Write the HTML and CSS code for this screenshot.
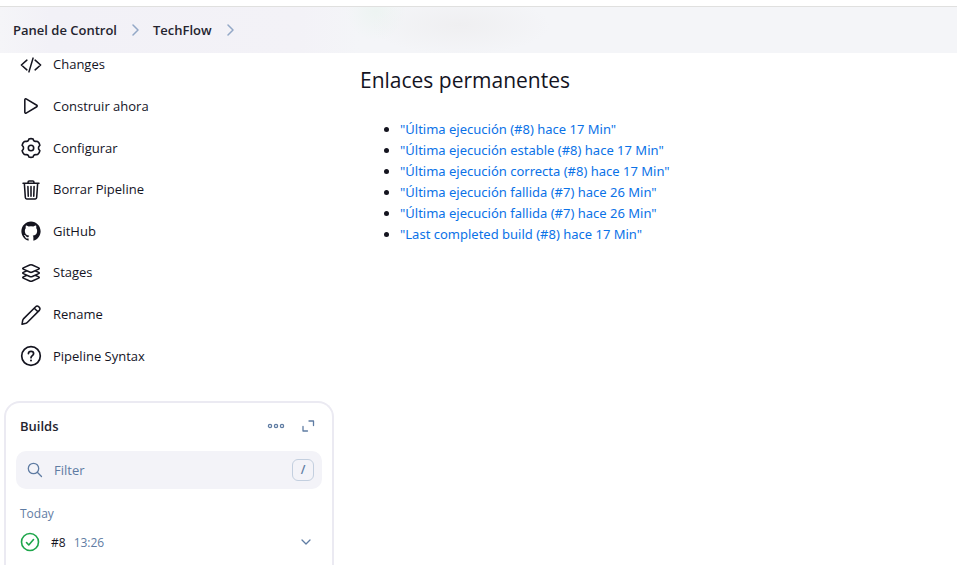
FILE: index.html
```html
<!DOCTYPE html>
<html lang="es">
<head>
<meta charset="utf-8">
<title>TechFlow</title>
<meta name="viewport" content="width=device-width, initial-scale=1">
<link rel="stylesheet" href="styles.css">
</head>
<body>
<header class="topbar">
  <nav class="crumbs" aria-label="Breadcrumb">
    <a href="#">Panel de Control</a>
    <svg class="chevron" viewBox="0 0 12 12"><path d="M4 1l5 5-5 5"/></svg>
    <a href="#">TechFlow</a>
    <svg class="chevron" viewBox="0 0 12 12"><path d="M4 1l5 5-5 5"/></svg>
  </nav>
</header>
<div class="page">
  <aside class="sidebar">
    <nav class="tasks" aria-label="Pipeline">
      <a class="task" href="#"><svg class="icon" viewBox="0 0 512 512"><path d="M160 368L32 256l128-112M352 368l128-112-128-112M304 96l-96 320"/></svg>Changes</a>
      <a class="task" href="#"><svg class="icon" viewBox="0 0 512 512"><path d="M112 111v290c0 17.44 17 28.52 31 20.16l247.9-148.37c12.12-7.25 12.12-26.33 0-33.58L143 90.84c-14-8.36-31 2.72-31 20.16z"/></svg>Construir ahora</a>
      <a class="task" href="#"><svg class="icon gear" viewBox="0 0 22 22"><path d="M8.9 2Q11 1.2 13.1 2L13.7 3.7Q14.8 4.6 16 4.3L17.8 4.6Q19.5 6 19.9 8.3L18.7 9.7Q18.3 11 18.7 12.3L19.9 13.7Q19.5 16 17.8 17.4L16 17.7Q14.8 17.4 13.7 18.3L13.1 20Q11 20.8 8.9 20L8.3 18.3Q7.2 17.4 6 17.7L4.2 17.4Q2.5 16 2.1 13.7L3.3 12.3Q3.7 11 3.3 9.7L2.1 8.3Q2.5 6 4.2 4.6L6 4.3Q7.2 4.6 8.3 3.7Z"/><circle cx="11" cy="11" r="2.7"/></svg>Configurar</a>
      <a class="task" href="#"><svg class="icon" viewBox="0 0 512 512"><path d="M102 112l22 320c.95 18.490 14.400 32 32 32h200c17.670 0 30.870-13.510 32-32l22-320M70 100h372M188 100V72a24 24 0 0124-24h88a24 24 0 0124 24v28M256 176v224M184 176l8 224M328 176l-8 224"/></svg>Borrar Pipeline</a>
      <a class="task" href="#"><svg class="icon solid" viewBox="0 0 512 512"><path d="M256 32C132.300 32 32 134.900 32 261.700c0 101.500 64.200 187.500 153.200 217.900a17.560 17.560 0 003.800.400c8.300 0 11.500-6.100 11.500-11.400 0-5.500-.2-19.900-.3-39.100a102.400 102.400 0 01-22.600 2.700c-43.100 0-52.900-33.500-52.900-33.500-10.200-26.500-24.900-33.600-24.900-33.600-19.500-13.700-.1-14.100 1.400-14.100h.1c22.500 2 34.300 23.800 34.300 23.800 11.200 19.600 26.200 25.100 39.600 25.100a63 63 0 0025.600-6c2-14.800 7.800-24.900 14.200-30.700-49.700-5.800-102-25.500-102-113.500 0-25.100 8.700-45.600 23-61.600-2.300-5.800-10-29.200 2.200-60.800a18.640 18.640 0 015-.5c8.100 0 26.400 3.100 56.600 24.100a208.210 208.210 0 01112.200 0c30.200-21 48.500-24.100 56.600-24.100a18.640 18.640 0 015 .5c12.200 31.600 4.500 55 2.200 60.800 14.300 16.100 23 36.600 23 61.600 0 88.200-52.400 107.600-102.300 113.300 8 7.100 15.200 21.100 15.200 42.500 0 30.700-.3 55.500-.3 63 0 5.400 3.100 11.500 11.400 11.500a19.350 19.350 0 004-.4C415.900 449.200 480 363.100 480 261.700 480 134.900 379.700 32 256 32z"/></svg>GitHub</a>
      <a class="task" href="#"><svg class="icon" viewBox="0 0 512 512"><path d="M434.800 137.650l-149.360-68.100c-16.190-7.400-42.690-7.400-58.880 0L77.300 137.650c-17.600 8-17.600 21.090 0 29.090l148 67.500c16.890 7.700 44.690 7.700 61.580 0l148-67.500c17.520-8 17.520-21.100-.08-29.090zM160 308.520l-82.700 37.110c-17.600 8-17.600 21.100 0 29.100l148 67.500c16.890 7.690 44.690 7.690 61.580 0l148-67.500c17.600-8 17.600-21.100 0-29.100l-79.940-38.470M160 204.480l-82.800 37.160c-17.600 8-17.600 21.100 0 29.100l148 67.490c16.890 7.700 44.690 7.700 61.580 0l148-67.490c17.700-8 17.700-21.100.1-29.100L352 204.480"/></svg>Stages</a>
      <a class="task" href="#"><svg class="icon" viewBox="0 0 512 512"><path d="M364 64C384 42 414 42 436 64L450 78C470 98 470 128 450 148L174 424Q158 440 138 448L48 470 64 376Q70 356 86 340ZM332 98l84 84"/></svg>Rename</a>
      <a class="task" href="#"><svg class="icon help" viewBox="0 0 22 22"><circle cx="11" cy="11" r="9.300"/><path d="M8.400 8.600C8.600 5.700 13.600 5.700 13.600 8.700C13.600 10.600 11 10.700 11 12.700"/><circle class="dot" cx="11" cy="15.500" r="1"/></svg>Pipeline Syntax</a>
    </nav>
    <section class="builds" aria-labelledby="builds-title">
      <div class="builds-head">
        <h2 id="builds-title">Builds</h2>
        <button class="tool" type="button" aria-label="More"><svg viewBox="0 0 18 18"><circle cx="3" cy="9" r="1.600"/><circle cx="9" cy="9" r="1.600"/><circle cx="15" cy="9" r="1.600"/></svg></button>
        <button class="tool" type="button" aria-label="Expand"><svg viewBox="0 0 18 18"><path d="M10 4h4.500v4.500M4 9.500v4.500h4.500"/></svg></button>
      </div>
      <div class="filter">
        <svg viewBox="0 0 18 18"><circle cx="7.500" cy="7.500" r="5.200"/><path d="M11.300 11.300l4.200 4.200"/></svg>
        <input type="text" placeholder="Filter" aria-label="Filter">
        <kbd>/</kbd>
      </div>
      <h3>Today</h3>
      <div class="build">
        <svg class="ok" viewBox="0 0 20 20"><circle cx="10" cy="10" r="8.500"/><path d="M6.500 10.500l2.300 2.500 4.700-5.500"/></svg>
        <a class="number" href="#">#8</a>
        <a class="time" href="#">13:26</a>
        <button class="tool" type="button" aria-label="Build #8"><svg viewBox="0 0 18 18"><path d="M5 7l4 4 4-4"/></svg></button>
      </div>
    </section>
  </aside>
  <main class="content">
    <h1>Enlaces permanentes</h1>
    <ul>
      <li><a href="#">"Última ejecución (#8) hace 17 Min"</a></li>
      <li><a href="#">"Última ejecución estable (#8) hace 17 Min"</a></li>
      <li><a href="#">"Última ejecución correcta (#8) hace 17 Min"</a></li>
      <li><a href="#">"Última ejecución fallida (#7) hace 26 Min"</a></li>
      <li><a href="#">"Última ejecución fallida (#7) hace 26 Min"</a></li>
      <li><a href="#">"Last completed build (#8) hace 17 Min"</a></li>
    </ul>
  </main>
</div>
</body>
</html>
```

FILE: styles.css
```css
:root {
  --text: #14141f;
  --muted: #5f7ca3;
  --link: #0b72e7;
  --line: #ebeaf2;
  --field: #f3f3f8;
}

* { box-sizing: border-box; }

body {
  display: flex;
  flex-direction: column;
  min-height: 100vh;
  margin: 0;
  padding-top: 6px;
  background: #fff;
  color: var(--text);
  font: 13px/21px "Open Sans", "Noto Sans", sans-serif;
}

a { color: inherit; text-decoration: none; }

h1, h2, h3 { margin: 0; }

svg {
  display: block;
  fill: none;
  stroke: currentColor;
  stroke-linecap: round;
  stroke-linejoin: round;
}

.topbar {
  position: relative;
  z-index: 1;
  border-top: 1px solid #e0e0df;
  background:
    radial-gradient(ellipse 90px 30px at 460px 18px, #efeff1, transparent),
    radial-gradient(ellipse 30px 30px at 376px 4px, #edf4f2, transparent),
    linear-gradient(90deg, #f5f5f8, #f2f1f7 50px, #f3f2f7 300px, #f4f5f8 360px);
}

.crumbs {
  display: flex;
  align-items: center;
  gap: 12px;
  height: 46px;
  padding: 0 13px;
  color: #24242f;
  font-weight: 600;
}

.chevron { width: 12px; height: 12px; color: #93a8c7; stroke-width: 1.5; }

.page {
  display: grid;
  flex: 1;
  grid-template-columns: 334px 1fr;
  gap: 26px;
}

.sidebar {
  display: flex;
  flex-direction: column;
  margin-top: -9px;
  padding-left: 4px;
}

.tasks {
  display: grid;
  grid-auto-rows: 1fr;
  min-height: 333px;
}

.task {
  display: flex;
  align-items: center;
  gap: 11px;
  padding-left: 16px;
}

.icon { width: 22px; height: 22px; stroke-width: 36; }
.icon.gear { stroke-width: 1.6; }
.icon.help { stroke-width: 1.7; }
.icon.solid { fill: currentColor; stroke: none; }
.dot { fill: currentColor; stroke: none; }

.builds {
  flex: 1;
  margin-top: 24px;
  padding: 8px 10px 0;
  border: 2px solid var(--line);
  border-bottom: 0;
  border-radius: 16px 16px 0 0;
}

.builds-head {
  display: flex;
  align-items: center;
  gap: 4px;
  height: 30px;
  padding-left: 4px;
}

.builds-head h2 { flex: 1; color: #24242f; font-size: 13px; font-weight: 600; }

.tool {
  display: grid;
  place-items: center;
  width: 28px;
  height: 28px;
  padding: 0;
  border: 0;
  background: none;
  color: var(--muted);
}

.tool svg { width: 18px; height: 18px; stroke-width: 1.3; }

.filter {
  display: flex;
  align-items: center;
  gap: 10px;
  height: 38px;
  margin-top: 10px;
  padding: 0 8px 0 10px;
  border-radius: 10px;
  background: var(--field);
  color: var(--muted);
}

.filter svg { width: 18px; height: 18px; stroke-width: 1.3; }

.filter input {
  flex: 1;
  min-width: 0;
  padding: 0;
  border: 0;
  outline: 0;
  background: none;
  font: inherit;
}

.filter input::placeholder { color: var(--muted); opacity: 1; }

kbd {
  width: 22px;
  height: 22px;
  border: 1px solid #c3cfdf;
  border-radius: 6px;
  font: 600 12px/20px "Open Sans", sans-serif;
  text-align: center;
}

.builds h3 {
  margin-top: 14px;
  padding-left: 4px;
  color: var(--muted);
  font-size: 12px;
  font-weight: 400;
}

.build {
  display: flex;
  align-items: center;
  gap: 8px;
  height: 36px;
  padding: 0 2px 0 4px;
  font-size: 12px;
}

.ok { width: 20px; height: 20px; color: #1ea64b; stroke-width: 1.6; }
.number { margin-left: 3px; }
.time { flex: 1; color: var(--muted); }

.content { padding-top: 12px; }

.content h1 {
  font-size: 21px;
  font-weight: 500;
  line-height: 30px;
}

.content ul {
  margin: 24px 0 0;
  padding-left: 40px;
  font-family: "Noto Sans", "Open Sans", sans-serif;
}

.content li a { color: var(--link); }
```
